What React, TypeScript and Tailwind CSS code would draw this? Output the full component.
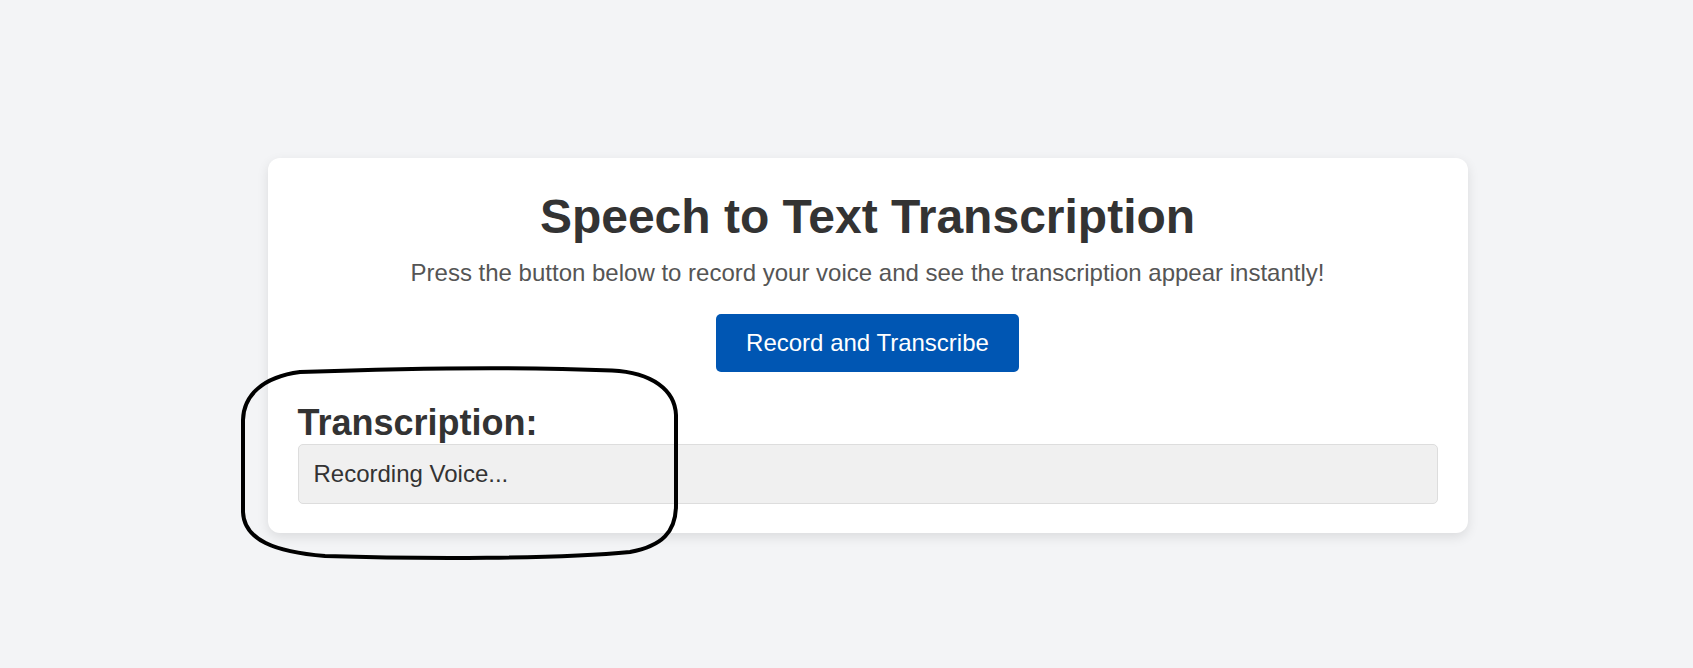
import React from "react";

const Annotation = () => (
  <svg
    className="pointer-events-none absolute left-0 top-0"
    width={1693}
    height={668}
    viewBox="0 0 1693 668"
    fill="none"
  >
    <path
      d="M300 372 C410 368, 530 367, 612 370.5 C652 372.5, 675 390, 676 415 L676 505 C676 532, 662 546, 630 552 C560 559, 420 559, 325 556 C275 552, 244 540, 243 512 L243 420 C243.5 396, 262 377, 300 372 Z"
      stroke="#000"
      strokeWidth={4}
      strokeLinejoin="round"
    />
  </svg>
);

const App = () => {
  return (
    <div className="relative flex min-h-screen items-start justify-center bg-[#f3f4f6] pl-[42px] pt-[158px] font-['Liberation_Sans',Arial,sans-serif]">
      <div className="w-[1200px] rounded-[12px] bg-white px-[30px] pb-[29px] pt-[31px] text-center shadow-[0_4px_12px_rgba(0,0,0,0.1)]">
        <h1 className="text-[48px] font-bold leading-[55px] text-[#333]">
          Speech to Text Transcription
        </h1>
        <p className="mt-[15px] text-[24px] leading-[28px] text-[#555]">
          Press the button below to record your voice and see the transcription
          appear instantly!
        </p>
        <div className="mt-[27px] flex justify-center">
          <button className="rounded-[5px] bg-[#0056b3] px-[30px] py-[15px] text-[24px] leading-[28px] text-white">
            Record and Transcribe
          </button>
        </div>
        <div className="mt-[30px] text-left">
          <h2 className="text-[36px] font-bold leading-[41px] text-[#333]">
            Transcription:
          </h2>
          <div className="mt-px rounded-[5px] border border-[#ddd] bg-[#f0f0f0] p-[15px] text-[24px] leading-[28px] text-[#333]">
            Recording Voice...
          </div>
        </div>
      </div>
      <Annotation />
    </div>
  );
};

export default App;
